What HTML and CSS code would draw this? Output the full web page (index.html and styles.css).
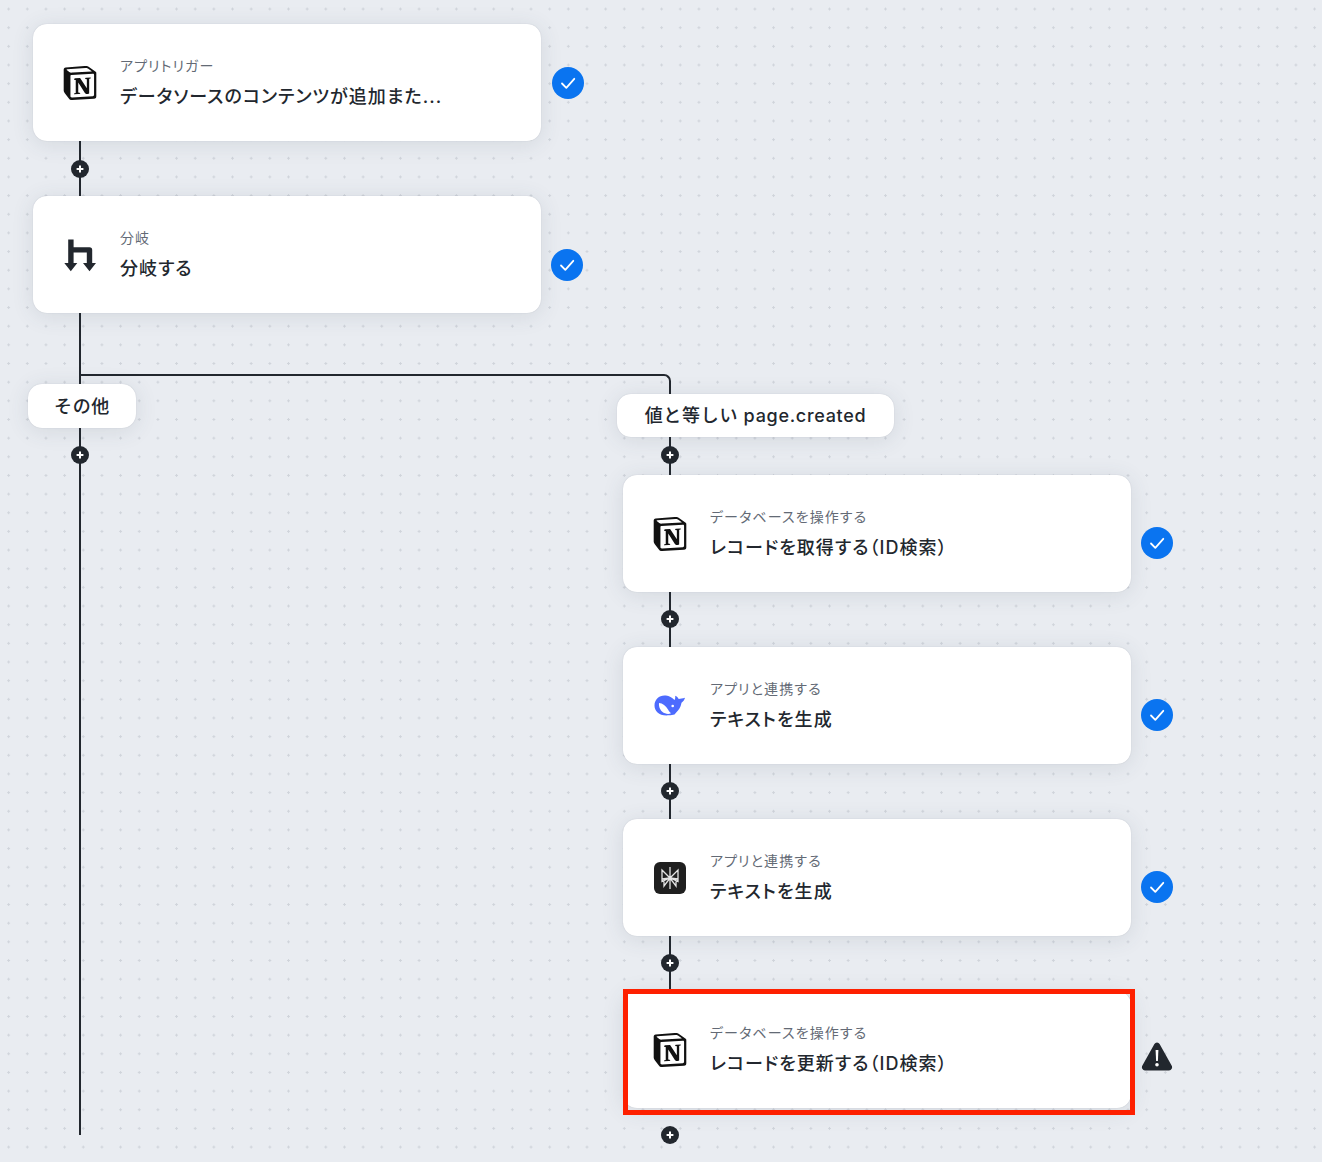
FILE: index.html
```html
<!DOCTYPE html>
<html lang="ja">
<head>
    <meta charset="UTF-8">
    <title>フローボット</title>
    <link rel="stylesheet" href="styles.css">
</head>
<body>
    <svg class="defs" width="0" height="0">
        <symbol id="notion" viewBox="0 0 24 24">
            <path fill="#fff" d="M2 2l15-1 5 4v17L6 23l-4-5z"/>
            <path fill="#111" d="M4.459 4.208c.746.606 1.026.56 2.428.466l13.215-.793c.28 0 .047-.28-.046-.326L17.86 1.968c-.42-.326-.981-.7-2.055-.607L3.01 2.295c-.466.046-.56.28-.374.466zm.793 3.08v13.904c0 .747.373 1.027 1.214.98l14.523-.84c.841-.046.935-.56.935-1.167V6.354c0-.606-.233-.933-.748-.887l-15.177.887c-.56.047-.747.327-.747.933zm14.337.745c.093.42 0 .84-.42.888l-.7.14v10.264c-.608.327-1.168.514-1.635.514-.748 0-.935-.234-1.495-.933l-4.577-7.186v6.952L12.21 19s0 .84-1.168.84l-3.222.186c-.093-.186 0-.653.327-.746l.84-.233V9.854L7.822 9.76c-.094-.42.14-1.026.793-1.073l3.456-.233 4.764 7.279v-6.44l-1.215-.14c-.093-.514.28-.887.747-.933zM1.936 1.035l13.31-.98c1.634-.14 2.055-.047 3.082.7l4.249 2.986c.7.513.934.653.934 1.213v16.378c0 1.026-.373 1.634-1.68 1.726l-15.458.934c-.98.047-1.448-.093-1.962-.747l-3.129-4.06c-.56-.747-.793-1.306-.793-1.96V2.667c0-.839.374-1.54 1.447-1.632z"/>
        </symbol>
        <symbol id="check" viewBox="0 0 32 32">
            <circle cx="16" cy="16" r="16" fill="#0a74f0"/>
            <path d="M10 16.5l4.3 4.3 8-9" fill="none" stroke="#fff" stroke-width="1.8" stroke-linecap="round" stroke-linejoin="round"/>
        </symbol>
        <symbol id="plus" viewBox="0 0 18 18">
            <circle cx="9" cy="9" r="9" fill="#22272e"/>
            <path d="M5.6 9h6.8M9 5.6v6.8" stroke="#fff" stroke-width="2"/>
        </symbol>
    </svg>

    <div class="canvas">
        <!-- connectors -->
        <div class="line line-a"></div>
        <div class="line line-b"></div>
        <div class="elbow"></div>
        <div class="line line-c"></div>
        <div class="line line-d"></div>

        <svg class="add add-1"><use href="#plus"/></svg>
        <svg class="add add-2"><use href="#plus"/></svg>
        <svg class="add add-3"><use href="#plus"/></svg>
        <svg class="add add-4"><use href="#plus"/></svg>
        <svg class="add add-5"><use href="#plus"/></svg>
        <svg class="add add-6"><use href="#plus"/></svg>
        <svg class="add add-7"><use href="#plus"/></svg>

        <!-- nodes -->
        <div class="card card-1">
            <svg class="icon icon-notion"><use href="#notion"/></svg>
            <div class="card-text">
                <div class="card-sub">アプリトリガー</div>
                <div class="card-title">データソースのコンテンツが追加また...</div>
            </div>
        </div>
        <svg class="status status-1"><use href="#check"/></svg>

        <div class="card card-2">
            <svg class="icon icon-branch" viewBox="0 0 34 34">
                <path fill="#22272e" d="M5.200 1.500h5.400v7.800h15.900a2.700 2.700 0 0 1 2.700 2.700V25H33l-6.500 8.300L20 25h3.800V14.500H10.600V25h3.700l-6.500 8.300L1.300 25h3.900z"/>
            </svg>
            <div class="card-text">
                <div class="card-sub">分岐</div>
                <div class="card-title">分岐する</div>
            </div>
        </div>
        <svg class="status status-2"><use href="#check"/></svg>

        <div class="pill pill-other">その他</div>
        <div class="pill pill-value">値と等しい page.created</div>

        <div class="card card-3">
            <svg class="icon icon-notion"><use href="#notion"/></svg>
            <div class="card-text">
                <div class="card-sub">データベースを操作する</div>
                <div class="card-title">レコードを取得する（ID検索）</div>
            </div>
        </div>
        <svg class="status status-3"><use href="#check"/></svg>

        <div class="card card-4">
            <svg class="icon icon-whale" viewBox="0 0 32 23">
                <path fill="#4d6bfe" d="M.5 11.500C.5 5.500 5 1.500 10.500 1.500c2 0 3.500.3 5 1 2 .8 3.500 2 5 3.500.7-1 .9-2.300.7-4.300 1.500.6 2.800 1.800 3.500 3.200 1.800-.3 3.800-.3 6.300-1.200-.5 2.300-2 4-3.500 5-.6 3-1.500 5.500-3.500 7.800-1.200 1.300-2.500 2.500-3.500 4-1.500.3-3.500.8-5.500.8C5.500 22.300.5 17.500.5 11.500z"/>
                <path fill="#fff" d="M5 9c3.500 0 7 3 9 6.500 1 1.800 2 3 3 3.800-1.800.8-4 .8-6 0C7 18 4.500 13.500 5 9z"/>
                <circle cx="18.700" cy="12" r="1.300" fill="#fff"/>
            </svg>
            <div class="card-text">
                <div class="card-sub">アプリと連携する</div>
                <div class="card-title">テキストを生成</div>
            </div>
        </div>
        <svg class="status status-4"><use href="#check"/></svg>

        <div class="card card-5">
            <svg class="icon icon-perplexity" viewBox="0 0 32 32">
                <rect width="32" height="32" rx="6" fill="#1f1f1f"/>
                <path d="M16 5v22M8 8l8 8 8-8v9l-8-1-8 1zM8 11v8.500l8-3.500 8 3.500V11M10 24v-6l6-2 6 2v6l-6-8z" fill="none" stroke="#e4e4e4" stroke-width="1.300"/>
            </svg>
            <div class="card-text">
                <div class="card-sub">アプリと連携する</div>
                <div class="card-title">テキストを生成</div>
            </div>
        </div>
        <svg class="status status-5"><use href="#check"/></svg>

        <div class="card card-6">
            <svg class="icon icon-notion"><use href="#notion"/></svg>
            <div class="card-text">
                <div class="card-sub">データベースを操作する</div>
                <div class="card-title">レコードを更新する（ID検索）</div>
            </div>
        </div>
        <svg class="warning" viewBox="0 0 32 29">
            <path fill="#22272e" d="M13.400 2a3 3 0 0 1 5.200 0l12 21.500A3.300 3.300 0 0 1 28 28.500H4a3.300 3.300 0 0 1-2.600-5z"/>
            <path fill="#fff" d="M14.600 8h2.800l-.5 11h-1.800z"/>
            <circle cx="16" cy="22.800" r="1.800" fill="#fff"/>
        </svg>
        <div class="highlight"></div>
    </div>
</body>
</html>
```

FILE: styles.css
```css
html, body {
    margin: 0;
    padding: 0;
}
body {
    font-family: Inter, "Noto Sans CJK JP", sans-serif;
    color: #22272e;
}
.defs {
    position: absolute;
}
.canvas {
    position: relative;
    width: 1322px;
    height: 1162px;
    overflow: hidden;
    background-color: #e9ecf1;
    background-image: radial-gradient(circle, #d0d4db 1px, transparent 1.4px);
    background-size: 18.67px 18.67px;
    background-position: -.7px -.3px;
}

/* connectors */
.line {
    position: absolute;
    width: 2px;
    background: #22272e;
}
.line-a { left: 79px; top: 141px; height: 56px; }
.line-b { left: 79px; top: 313px; height: 822px; }
.line-c { left: 669px; top: 437px; height: 40px; }
.line-d { left: 669px; top: 592px; height: 399px; }
.elbow {
    position: absolute;
    left: 80px;
    top: 374px;
    width: 591px;
    height: 22px;
    box-sizing: border-box;
    border-top: 2px solid #22272e;
    border-right: 2px solid #22272e;
    border-top-right-radius: 7px;
}
.add {
    position: absolute;
    width: 18px;
    height: 18px;
}
.add-1 { left: 71px; top: 160px; }
.add-2 { left: 71px; top: 446px; }
.add-3 { left: 661px; top: 446px; }
.add-4 { left: 661px; top: 610px; }
.add-5 { left: 661px; top: 782px; }
.add-6 { left: 661px; top: 954px; }
.add-7 { left: 661px; top: 1126px; }

/* nodes */
.card {
    position: absolute;
    width: 508px;
    height: 117px;
    display: flex;
    align-items: center;
    box-sizing: border-box;
    background: #fff;
    border-radius: 14px;
    box-shadow: 0 0 1px rgba(60, 70, 90, .25), 0 3px 22px rgba(60, 70, 90, .12);
}
.card-1 { left: 33px; top: 24px; }
.card-2 { left: 33px; top: 196px; }
.card-3 { left: 623px; top: 475px; }
.card-4 { left: 623px; top: 647px; }
.card-5 { left: 623px; top: 819px; }
.card-6 { left: 623px; top: 991px; }
.icon {
    flex: none;
    width: 34px;
    height: 34px;
    margin-left: 30px;
    margin-right: 23px;
}
.icon-whale {
    width: 32px;
    height: 23px;
    margin-left: 31px;
    margin-right: 24px;
}
.icon-perplexity {
    width: 32px;
    height: 32px;
    margin-left: 31px;
    margin-right: 24px;
}
.card-text {
    display: flex;
    flex-direction: column;
    gap: 10px;
}
.card-sub {
    font-size: 14px;
    line-height: 18px;
    letter-spacing: 1.1px;
    color: #636a75;
    font-feature-settings: "palt";
}
.card-title {
    font-size: 18px;
    line-height: 24px;
    font-weight: 500;
    letter-spacing: 1.05px;
    color: #22272e;
    font-feature-settings: "palt";
}
.pill {
    position: absolute;
    display: flex;
    align-items: center;
    justify-content: center;
    box-sizing: border-box;
    background: #fff;
    border-radius: 14px;
    box-shadow: 0 0 1px rgba(60, 70, 90, .25), 0 3px 22px rgba(60, 70, 90, .12);
    font-size: 18px;
    font-weight: 500;
    letter-spacing: .7px;
    white-space: nowrap;
    padding-bottom: 3px;
}
.pill-other { left: 28px; top: 384px; width: 108px; height: 44px; }
.pill-value { left: 617px; top: 394px; width: 277px; height: 43px; }
.status {
    position: absolute;
    width: 32px;
    height: 32px;
}
.status-1 { left: 552px; top: 67px; }
.status-2 { left: 551px; top: 249px; }
.status-3 { left: 1141px; top: 527px; }
.status-4 { left: 1141px; top: 699px; }
.status-5 { left: 1141px; top: 871px; }
.warning {
    position: absolute;
    left: 1141px;
    top: 1042px;
    width: 32px;
    height: 29px;
}
.highlight {
    position: absolute;
    left: 623px;
    top: 989px;
    width: 512px;
    height: 126px;
    box-sizing: border-box;
    border: 5px solid #fe2000;
}
```
